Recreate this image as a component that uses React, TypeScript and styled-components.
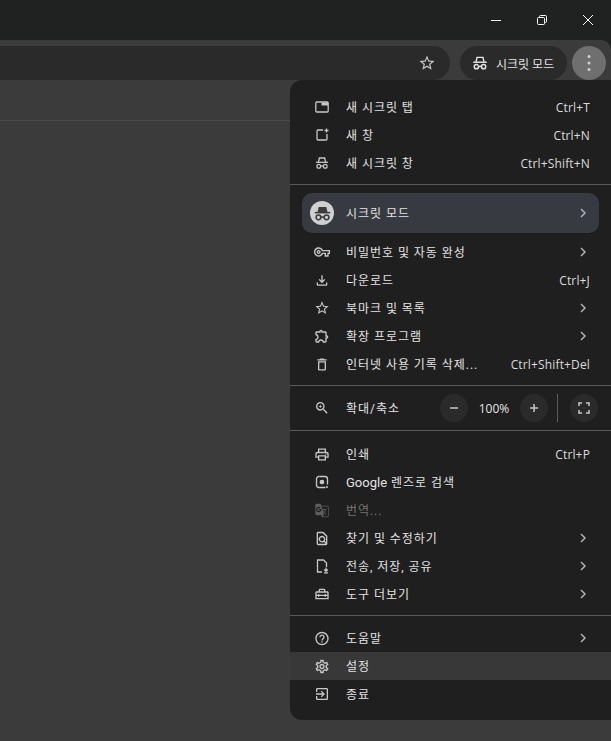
import styled, { createGlobalStyle } from "styled-components";
import type { ReactNode } from "react";
import {
  MdOutlineDelete,
  MdOutlineExitToApp,
  MdOutlineExtension,
  MdOutlineFileDownload,
  MdOutlineFindInPage,
  MdOutlineGTranslate,
  MdOutlineHelpOutline,
  MdOutlineHomeRepairService,
  MdOutlinePrint,
  MdOutlineSettings,
  MdOutlineStarBorder,
  MdOutlineVpnKey,
  MdOutlineZoomIn,
} from "react-icons/md";

const GlobalStyle = createGlobalStyle`
  html, body {
    margin: 0;
    padding: 0;
    height: 100%;
    background: #3b3b3b;
    overflow: hidden;
  }
  body {
    font-family: "Roboto", "Noto Sans CJK KR", sans-serif;
  }
`;

const Window = styled.div`
  position: relative;
  width: 611px;
  height: 741px;
  display: flex;
  flex-direction: column;
  overflow: hidden;
  background: #202121;
`;

const TitleBar = styled.div`
  height: 40px;
  flex: none;
  display: flex;
  justify-content: flex-end;
  align-items: center;
`;

const WinButton = styled.div`
  width: 46px;
  height: 40px;
  display: flex;
  align-items: center;
  justify-content: center;
  color: #fff;
`;

const Toolbar = styled.div`
  height: 40px;
  flex: none;
  background: #3b3b3b;
  border-top-right-radius: 10px;
  display: flex;
  align-items: flex-start;
  padding: 6px 5px 0 0;
  box-sizing: border-box;
`;

const Omnibox = styled.div`
  flex: 1;
  height: 34px;
  background: #2a2a2a;
  border-radius: 0 17px 17px 0;
  display: flex;
  align-items: center;
  justify-content: flex-end;
  padding-right: 14px;
  color: #c7c7c7;
`;

const Chip = styled.div`
  width: 107px;
  height: 34px;
  margin: 0 5px 0 10px;
  border-radius: 17px;
  background: #2a2a2a;
  color: #e3e3e3;
  display: flex;
  align-items: center;
  gap: 7px;
  padding-left: 11px;
  box-sizing: border-box;
  font-size: 12px;
`;

const MoreButton = styled.div`
  width: 34px;
  height: 34px;
  border-radius: 50%;
  background: #6f6f6f;
  color: #d0d0d0;
  display: flex;
  align-items: center;
  justify-content: center;
`;

const PageArea = styled.div`
  flex: 1;
  background: #3b3b3b;
`;

const BookmarkBar = styled.div`
  height: 41px;
  box-sizing: border-box;
  border-bottom: 1px solid #4a4a4a;
`;

const Menu = styled.div`
  position: absolute;
  left: 290px;
  top: 80px;
  width: 321px;
  height: 640px;
  background: #1f1f1f;
  border-radius: 12px 0 0 12px;
  padding-top: 13px;
  box-sizing: border-box;
  color: #e3e3e3;
  font-size: 12px;
`;

const Section = styled.div<{ $top?: number }>`
  display: flex;
  flex-direction: column;
  margin-top: ${(p) => p.$top ?? 0}px;
`;

const Divider = styled.div<{ $before: number; $after: number }>`
  height: 1px;
  background: #5a5a5a;
  margin: ${(p) => p.$before}px 0 ${(p) => p.$after}px;
`;

const Row = styled.div<{ $hover?: boolean; $disabled?: boolean }>`
  height: 28px;
  display: flex;
  align-items: center;
  padding: 0 21px 0 24px;
  background: ${(p) => (p.$hover ? "#383838" : "transparent")};
  color: ${(p) => (p.$disabled ? "#757575" : "#e3e3e3")};
`;

const IconSlot = styled.div<{ $disabled?: boolean }>`
  width: 16px;
  height: 16px;
  flex: none;
  margin-right: 16px;
  color: ${(p) => (p.$disabled ? "#5e5e5e" : "#c7c7c7")};
  display: flex;
  align-items: center;
  justify-content: center;
`;

const Label = styled.span`
  flex: 1;
  white-space: nowrap;
  letter-spacing: 0.96px;
  line-height: 16px;
  padding-top: 2px;
`;

const Latin = styled.span`
  font-size: 13px;
  letter-spacing: 0;
`;

const Shortcut = styled.span`
  font-family: "Open Sans", sans-serif;
  color: #dcdcdc;
  white-space: nowrap;
  line-height: 16px;
  letter-spacing: 0.15px;
  padding-top: 1px;
`;

const Arrow = styled.div`
  width: 8px;
  height: 10px;
  color: #b0b0b0;
  display: flex;
  margin-right: 3px;
`;

const ProfileRow = styled.div`
  height: 40px;
  margin: 0 12px;
  border-radius: 10px;
  background: #373a40;
  display: flex;
  align-items: center;
  padding: 0 9px 0 8px;
`;

const Avatar = styled.div`
  width: 24px;
  height: 24px;
  border-radius: 50%;
  background: #d0d0d0;
  color: #3b3b3b;
  margin-right: 12px;
  display: flex;
  align-items: center;
  justify-content: center;
`;

const ZoomRow = styled.div`
  height: 28px;
  display: flex;
  align-items: center;
  padding-left: 24px;
`;

const RoundButton = styled.div`
  width: 28px;
  height: 28px;
  flex: none;
  border-radius: 50%;
  background: #2a2a2a;
  color: #c7c7c7;
  display: flex;
  align-items: center;
  justify-content: center;
`;

const ZoomValue = styled.span`
  width: 52px;
  text-align: center;
  font-family: "Open Sans", sans-serif;
`;

const ZoomLabel = styled(Label)`
  flex: none;
  width: 94px;
`;

const VLine = styled.div`
  width: 1px;
  height: 28px;
  background: #5a5a5a;
  margin: 0 12px 0 9px;
`;

const Svg = ({ children, size = 16 }: { children: ReactNode; size?: number }) => (
  <svg width={size} height={size} viewBox="0 0 16 16" fill="none" stroke="currentColor" strokeWidth="1.3">
    {children}
  </svg>
);

const IncognitoFilled = () => (
  <Svg size={19}>
    <path d="M4.8 2.500h6.400l1 4.200H3.800z" fill="currentColor" stroke="none" />
    <path d="M1.500 7.300h13" />
    <circle cx="4.600" cy="11.200" r="2" />
    <circle cx="11.400" cy="11.200" r="2" />
    <path d="M6.600 11h2.800" />
  </Svg>
);

const IncognitoLine = ({ size = 16 }: { size?: number }) => (
  <Svg size={size}>
    <path d="M4.500 7l.8-4h5.400l.8 4" />
    <path d="M2 7.300h12" />
    <circle cx="4.800" cy="11.300" r="1.900" />
    <circle cx="11.200" cy="11.300" r="1.900" />
    <path d="M6.700 11h2.600" />
  </Svg>
);

const TabIcon = () => (
  <Svg>
    <rect x="1.800" y="3" width="12.400" height="10" rx="1" />
    <path d="M7.500 3.500v3h6.500v-3z" fill="currentColor" stroke="none" />
  </Svg>
);

const NewWindowIcon = () => (
  <Svg>
    <path d="M9 3H4a1 1 0 0 0-1 1v8a1 1 0 0 0 1 1h8a1 1 0 0 0 1-1V7" />
    <path d="M12.500 1.500v4M10.500 3.500h4" />
  </Svg>
);

const LensIcon = () => (
  <Svg>
    <path d="M5.500 2.500H5A2.500 2.500 0 0 0 2.500 5v6A2.500 2.500 0 0 0 5 13.500h6.500" />
    <path d="M5.500 2.500h5.500A2.500 2.500 0 0 1 13.500 5v5.500" />
    <circle cx="8" cy="8" r="1.700" fill="currentColor" />
    <circle cx="13" cy="13" r="1" fill="currentColor" stroke="none" />
  </Svg>
);

const ShareIcon = () => (
  <Svg>
    <path d="M8 14H3.500V2h6l3 3v4" />
    <path d="M12 9.500v3.500M10.200 11.500l1.800 1.800 1.800-1.800M10 14.800h4" />
  </Svg>
);

const ChevronRight = () => (
  <Arrow>
    <svg width="8" height="10" viewBox="0 0 8 10" fill="none" stroke="currentColor" strokeWidth="1.500">
      <path d="M2 1l4 4-4 4" />
    </svg>
  </Arrow>
);

type ItemProps = {
  icon: ReactNode;
  label: ReactNode;
  shortcut?: string;
  submenu?: boolean;
  hover?: boolean;
  disabled?: boolean;
};

const Item = ({ icon, label, shortcut, submenu, hover, disabled }: ItemProps) => (
  <Row $hover={hover} $disabled={disabled}>
    <IconSlot $disabled={disabled}>{icon}</IconSlot>
    <Label>{label}</Label>
    {shortcut && <Shortcut>{shortcut}</Shortcut>}
    {submenu && <ChevronRight />}
  </Row>
);

const App = () => {
  return (
    <Window>
      <GlobalStyle />
      <TitleBar>
        <WinButton>
          <svg width="12" height="12" viewBox="0 0 12 12" stroke="currentColor" fill="none">
            <path d="M1 6.500h10" />
          </svg>
        </WinButton>
        <WinButton>
          <svg width="12" height="12" viewBox="0 0 12 12" stroke="currentColor" fill="none">
            <rect x="1.500" y="3.500" width="7" height="7" rx="1" />
            <path d="M3.500 3.500v-1a1 1 0 0 1 1-1h5a1 1 0 0 1 1 1v5a1 1 0 0 1-1 1h-1" />
          </svg>
        </WinButton>
        <WinButton>
          <svg width="12" height="12" viewBox="0 0 12 12" stroke="currentColor" fill="none">
            <path d="M1 1l10 10M11 1L1 11" />
          </svg>
        </WinButton>
      </TitleBar>
      <Toolbar>
        <Omnibox>
          <MdOutlineStarBorder size={18} />
        </Omnibox>
        <Chip>
          <IncognitoLine size={18} />
          시크릿 모드
        </Chip>
        <MoreButton>
          <svg width="16" height="16" viewBox="0 0 16 16" fill="currentColor">
            <circle cx="8" cy="1.500" r="1.500" />
            <circle cx="8" cy="8" r="1.500" />
            <circle cx="8" cy="14.500" r="1.500" />
          </svg>
        </MoreButton>
      </Toolbar>
      <PageArea>
        <BookmarkBar />
      </PageArea>
      <Menu>
        <Section>
          <Item icon={<TabIcon />} label="새 시크릿 탭" shortcut="Ctrl+T" />
          <Item icon={<NewWindowIcon />} label="새 창" shortcut="Ctrl+N" />
          <Item icon={<IncognitoLine />} label="새 시크릿 창" shortcut="Ctrl+Shift+N" />
        </Section>
        <Divider $before={7} $after={8} />
        <ProfileRow>
          <Avatar>
            <IncognitoFilled />
          </Avatar>
          <Label>시크릿 모드</Label>
          <ChevronRight />
        </ProfileRow>
        <Section $top={5}>
          <Item icon={<MdOutlineVpnKey size={16} />} label="비밀번호 및 자동 완성" submenu />
          <Item icon={<MdOutlineFileDownload size={17} />} label="다운로드" shortcut="Ctrl+J" />
          <Item icon={<MdOutlineStarBorder size={16} />} label="북마크 및 목록" submenu />
          <Item icon={<MdOutlineExtension size={16} />} label="확장 프로그램" submenu />
          <Item icon={<MdOutlineDelete size={17} />} label="인터넷 사용 기록 삭제..." shortcut="Ctrl+Shift+Del" />
        </Section>
        <Divider $before={7} $after={8} />
        <ZoomRow>
          <IconSlot>
            <MdOutlineZoomIn size={16} />
          </IconSlot>
          <ZoomLabel>확대/축소</ZoomLabel>
          <RoundButton>
            <svg width="12" height="12" viewBox="0 0 12 12" stroke="currentColor" strokeWidth="1.500">
              <path d="M2 6h8" />
            </svg>
          </RoundButton>
          <ZoomValue>100%</ZoomValue>
          <RoundButton>
            <svg width="12" height="12" viewBox="0 0 12 12" stroke="currentColor" strokeWidth="1.500">
              <path d="M2 6h8M6 2v8" />
            </svg>
          </RoundButton>
          <VLine />
          <RoundButton>
            <svg width="14" height="14" viewBox="0 0 14 14" stroke="currentColor" strokeWidth="1.500" fill="none">
              <path d="M2 5V2h3M9 2h3v3M12 9v3H9M5 12H2V9" />
            </svg>
          </RoundButton>
        </ZoomRow>
        <Divider $before={8} $after={9} />
        <Section>
          <Item icon={<MdOutlinePrint size={17} />} label="인쇄" shortcut="Ctrl+P" />
          <Item
            icon={<LensIcon />}
            label={
              <>
                <Latin>Google</Latin> 렌즈로 검색
              </>
            }
          />
          <Item icon={<MdOutlineGTranslate size={17} />} label="번역..." disabled />
          <Item icon={<MdOutlineFindInPage size={17} />} label="찾기 및 수정하기" submenu />
          <Item icon={<ShareIcon />} label="전송, 저장, 공유" submenu />
          <Item icon={<MdOutlineHomeRepairService size={16} />} label="도구 더보기" submenu />
        </Section>
        <Divider $before={7} $after={8} />
        <Section>
          <Item icon={<MdOutlineHelpOutline size={17} />} label="도움말" submenu />
          <Item icon={<MdOutlineSettings size={17} />} label="설정" hover />
          <Item icon={<MdOutlineExitToApp size={16} />} label="종료" />
        </Section>
      </Menu>
    </Window>
  );
};

export default App;
